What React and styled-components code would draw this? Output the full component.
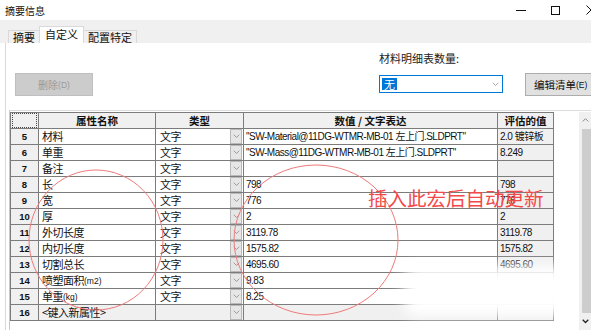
import React from 'react';
import styled, { createGlobalStyle } from 'styled-components';

const GlobalStyle = createGlobalStyle`
  html, body {
    margin: 0;
    padding: 0;
    background: #fff;
    overflow: hidden;
  }
  body {
    font-family: "Liberation Sans", "Noto Sans CJK SC", sans-serif;
    color: #000;
  }
`;

const Page = styled.div`
  position: relative;
  width: 591px;
  height: 330px;
  overflow: hidden;
  background: #fff;
`;

const TitleBar = styled.div`
  display: flex;
  align-items: center;
  height: 20px;
  padding-left: 5px;
`;

const Title = styled.span`
  font-family: "Noto Sans CJK SC", sans-serif;
  font-size: 10px;
  color: #111;
`;

const WinControls = styled.div`
  display: flex;
  margin-left: auto;
  margin-right: -17px;
  height: 20px;
`;

const CaptionButton = styled.div`
  width: 35px;
  display: flex;
  align-items: center;
  justify-content: center;
`;

const TabStrip = styled.div`
  display: flex;
  align-items: flex-end;
  height: 23px;
  background: #f0f0f0;
  padding-left: 8px;
`;

const Tab = styled.div`
  height: ${(p) => (p.$active ? '15px' : '12px')};
  padding: ${(p) => (p.$active ? '1px 5px 0' : '0 4px')};
  background: ${(p) => (p.$active ? '#fff' : '#f0f0f0')};
  border: 1px solid #d9d9d9;
  border-bottom: none;
  font-family: "Noto Sans CJK SC", sans-serif;
  font-size: 11px;
  line-height: 13px;
  color: #111;
  display: flex;
  align-items: ${(p) => (p.$active ? 'flex-start' : 'center')};
  & + & {
    margin-left: -1px;
  }
`;

const Body = styled.div`
  margin-left: 5px;
  border-left: 1px solid #d9d9d9;
  height: 287px;
  display: flex;
  flex-direction: column;
`;

const Controls = styled.div`
  display: flex;
  align-items: flex-end;
  flex-shrink: 0;
  height: 53px;
  padding-left: 9px;
`;

const DeleteButton = styled.div`
  flex-shrink: 0;
  width: 76px;
  height: 21px;
  background: #cccccc;
  border: 1px solid #bfbfbf;
  color: #9a9a9a;
  font-family: "Noto Sans CJK SC", sans-serif;
  font-size: 10px;
  display: flex;
  align-items: center;
  justify-content: center;
`;

const Mnemonic = styled.span`
  font-family: "Liberation Sans", sans-serif;
  font-size: 8.5px;
`;

const RightGroup = styled.div`
  flex-shrink: 0;
  display: flex;
  flex-direction: column;
  margin-left: 286px;
`;

const FieldLabel = styled.div`
  font-family: "Noto Sans CJK SC", sans-serif;
  font-size: 11px;
  line-height: 14px;
  height: 14px;
  margin-bottom: 8px;
  color: #222;
`;

const FieldRow = styled.div`
  display: flex;
  align-items: center;
  height: 23px;
`;

const Select = styled.div`
  flex-shrink: 0;
  width: 120px;
  height: 16px;
  border: 1px solid #0078d7;
  background: #fff;
  display: flex;
  align-items: center;
  padding-left: 2px;
  margin-top: -1px;
`;

const Selected = styled.span`
  background: #0078d7;
  color: #fff;
  font-family: "Noto Sans CJK SC", sans-serif;
  font-size: 11px;
  line-height: 12px;
  padding: 0 2px;
`;

const SelectArrow = styled.div`
  margin-left: auto;
  width: 14px;
  display: flex;
  align-items: center;
  justify-content: center;
`;

const EditButton = styled.div`
  flex-shrink: 0;
  margin-left: 22px;
  width: 80px;
  height: 21px;
  background: #e1e1e1;
  border: 1px solid #adadad;
  font-family: "Noto Sans CJK SC", sans-serif;
  font-size: 10.5px;
  color: #111;
  display: flex;
  align-items: center;
  padding-left: 8px;
  white-space: nowrap;
`;

const GridPanel = styled.div`
  margin-top: 14px;
  margin-left: 3px;
  border-top: 1px solid #dcdcdc;
  border-left: 1px solid #c8c8c8;
  flex: 1;
  min-height: 0;
  display: flex;
  padding-top: 1px;
`;

const TableArea = styled.div`
  flex: 1;
`;

const Grid = styled.table`
  border-collapse: collapse;
  table-layout: fixed;
  width: 544px;
  tr {
    height: 16px;
  }
`;

const Cell = styled.td`
  padding: 0;
  border: 1px solid #7c7c7c;
  background: ${(p) => p.$bg || '#fff'};
  color: #111;
`;

const CellBox = styled.div`
  display: flex;
  align-items: center;
  height: 15px;
  padding-left: ${(p) => p.$pad || 2}px;
  padding-right: ${(p) => p.$padR || 0}px;
  overflow: hidden;
  white-space: nowrap;
  font-size: 10px;
  letter-spacing: -0.5px;
  line-height: 15px;
`;

const HeadCell = styled.th`
  padding: 0;
  border: 1px solid #7c7c7c;
  background: #f0f0f0;
  font-family: "Noto Sans CJK SC", sans-serif;
  font-size: 10.5px;
  font-weight: 700;
  line-height: 15px;
  height: 15px;
  text-align: center;
  color: #111;
  overflow: hidden;
`;

const Corner = styled.div`
  height: 13px;
  margin: 0 1px;
  border: 1px dotted #444;
`;

const RowHead = styled.td`
  padding: 0;
  border: 1px solid #7c7c7c;
  background: #f0f0f0;
  font-size: 9.5px;
  font-weight: 700;
  text-align: center;
  line-height: 15px;
  height: 15px;
  color: #111;
`;

const CjkText = styled.span`
  font-family: "Noto Sans CJK SC", sans-serif;
  font-size: 11px;
  letter-spacing: -0.5px;
  line-height: 15px;
`;

const Unit = styled.span`
  font-family: "Liberation Sans", sans-serif;
  font-size: 8.5px;
  letter-spacing: 0;
  padding-top: 2px;
`;

const DropBtn = styled.div`
  margin-left: auto;
  width: 10px;
  height: 13px;
  flex-shrink: 0;
  background: #e6e6e6;
  border: 1px solid #b8b8b8;
  display: flex;
  align-items: center;
  justify-content: center;
`;

const Scrollbar = styled.div`
  width: 12px;
  background: #f0f0f0;
  display: flex;
  flex-direction: column;
`;

const ScrollArrow = styled.div`
  height: 17px;
  width: 12px;
  flex-shrink: 0;
  display: flex;
  align-items: center;
  justify-content: center;
`;

const ScrollThumb = styled.div`
  width: 9px;
  margin-left: 3px;
  flex: 1;
  background: #cdcdcd;
`;

const Annotations = styled.svg`
  position: absolute;
  left: 0;
  top: 0;
  pointer-events: none;
`;

const RedNote = styled.div`
  position: absolute;
  left: 368px;
  top: 186px;
  font-family: "Noto Sans CJK SC", sans-serif;
  font-size: 19.5px;
  line-height: 24px;
  color: #f24a4a;
  white-space: nowrap;
`;

const Smudge = styled.div`
  position: absolute;
  left: 404px;
  top: 266px;
  width: 166px;
  height: 50px;
  background: #fff;
  filter: blur(7px);
  border-radius: 12px;
`;

const Chevron = ({ color = '#7a7a7a', up = false, w = 7, sw = 1 }) => (
  <svg width={w} height={w * 0.6} viewBox="0 0 10 6">
    <path
      d={up ? 'M1 5 L5 1 L9 5' : 'M1 1 L5 5 L9 1'}
      fill="none"
      stroke={color}
      strokeWidth={sw}
    />
  </svg>
);

const rows = [
  { n: 5, name: '材料', value: '"SW-Material@11DG-WTMR-MB-01 左上门.SLDPRT"', evalv: '2.0 镀锌板' },
  { n: 6, name: '单重', value: '"SW-Mass@11DG-WTMR-MB-01 左上门.SLDPRT"', evalv: '8.249' },
  { n: 7, name: '备注', value: '', evalv: '' },
  { n: 8, name: '长', value: '798', evalv: '798' },
  { n: 9, name: '宽', value: '776', evalv: '776' },
  { n: 10, name: '厚', value: '2', evalv: '2' },
  { n: 11, name: '外切长度', value: '3119.78', evalv: '3119.78' },
  { n: 12, name: '内切长度', value: '1575.82', evalv: '1575.82' },
  { n: 13, name: '切割总长', value: '4695.60', evalv: '4695.60' },
  { n: 14, name: '喷塑面积', unit: '(m2)', value: '9.83', evalv: '' },
  { n: 15, name: '单重', unit: '(kg)', value: '8.25', evalv: '' },
];

export default function App() {
  return (
    <Page>
      <GlobalStyle />
      <TitleBar>
        <Title>摘要信息</Title>
        <WinControls>
          <CaptionButton>
            <svg width="10" height="10" viewBox="0 0 10 10">
              <path d="M0 5.5 H10" stroke="#111" strokeWidth="1" />
            </svg>
          </CaptionButton>
          <CaptionButton>
            <svg width="9" height="9" viewBox="0 0 9 9">
              <rect x="0.5" y="0.5" width="8" height="8" fill="none" stroke="#111" strokeWidth="1" />
            </svg>
          </CaptionButton>
          <CaptionButton>
            <svg width="10" height="10" viewBox="0 0 10 10">
              <path d="M0.5 0.5 L9.5 9.5 M9.5 0.5 L0.5 9.5" stroke="#111" strokeWidth="1" />
            </svg>
          </CaptionButton>
        </WinControls>
      </TitleBar>

      <TabStrip>
        <Tab>摘要</Tab>
        <Tab $active>自定义</Tab>
        <Tab>配置特定</Tab>
      </TabStrip>

      <Body>
        <Controls>
          <DeleteButton>
            删除<Mnemonic>(D)</Mnemonic>
          </DeleteButton>
          <RightGroup>
            <FieldLabel>材料明细表数量:</FieldLabel>
            <FieldRow>
              <Select>
                <Selected>无</Selected>
                <SelectArrow>
                  <Chevron color="#888" w={7} />
                </SelectArrow>
              </Select>
              <EditButton>
                编辑清单<Mnemonic>(E)</Mnemonic>
              </EditButton>
            </FieldRow>
          </RightGroup>
        </Controls>

        <GridPanel>
          <TableArea>
            <Grid>
              <colgroup>
                <col style={{ width: 28 }} />
                <col style={{ width: 117 }} />
                <col style={{ width: 88 }} />
                <col style={{ width: 254 }} />
                <col style={{ width: 56 }} />
              </colgroup>
              <thead>
                <tr>
                  <HeadCell>
                    <Corner />
                  </HeadCell>
                  <HeadCell>属性名称</HeadCell>
                  <HeadCell>类型</HeadCell>
                  <HeadCell>数值 / 文字表达</HeadCell>
                  <HeadCell>评估的值</HeadCell>
                </tr>
              </thead>
              <tbody>
                {rows.map((r) => (
                  <tr key={r.n}>
                    <RowHead>{r.n}</RowHead>
                    <Cell>
                      <CellBox $pad={3}>
                        <CjkText>{r.name}</CjkText>
                        {r.unit && <Unit>{r.unit}</Unit>}
                      </CellBox>
                    </Cell>
                    <Cell>
                      <CellBox $pad={4} $padR={1}>
                        <CjkText>文字</CjkText>
                        <DropBtn>
                          <Chevron />
                        </DropBtn>
                      </CellBox>
                    </Cell>
                    <Cell>
                      <CellBox $pad={2}>{r.value}</CellBox>
                    </Cell>
                    <Cell $bg="#f0f0f0">
                      <CellBox $pad={2}>{r.evalv}</CellBox>
                    </Cell>
                  </tr>
                ))}
                <tr>
                  <RowHead>16</RowHead>
                  <Cell $bg="#f0f0f0">
                    <CellBox $pad={3}>
                      <CjkText>&lt;键入新属性&gt;</CjkText>
                    </CellBox>
                  </Cell>
                  <Cell $bg="#f0f0f0">
                    <CellBox $pad={4} $padR={1}>
                      <DropBtn>
                        <Chevron />
                      </DropBtn>
                    </CellBox>
                  </Cell>
                  <Cell $bg="#f0f0f0">
                    <CellBox />
                  </Cell>
                  <Cell $bg="#f0f0f0">
                    <CellBox />
                  </Cell>
                </tr>
              </tbody>
            </Grid>
          </TableArea>
          <Scrollbar>
            <ScrollArrow>
              <Chevron up color="#606060" w={7} />
            </ScrollArrow>
            <ScrollThumb />
            <ScrollArrow>
              <Chevron color="#222" w={7} sw={1.8} />
            </ScrollArrow>
          </Scrollbar>
        </GridPanel>
      </Body>

      <Smudge />
      <Annotations width="591" height="330" viewBox="0 0 591 330">
        <ellipse cx="96" cy="240" rx="67" ry="70" fill="none" stroke="#f07a7a" strokeWidth="1" />
        <ellipse cx="316" cy="240" rx="82" ry="75" fill="none" stroke="#f07a7a" strokeWidth="1" />
      </Annotations>
      <RedNote>插入此宏后自动更新</RedNote>
    </Page>
  );
}
